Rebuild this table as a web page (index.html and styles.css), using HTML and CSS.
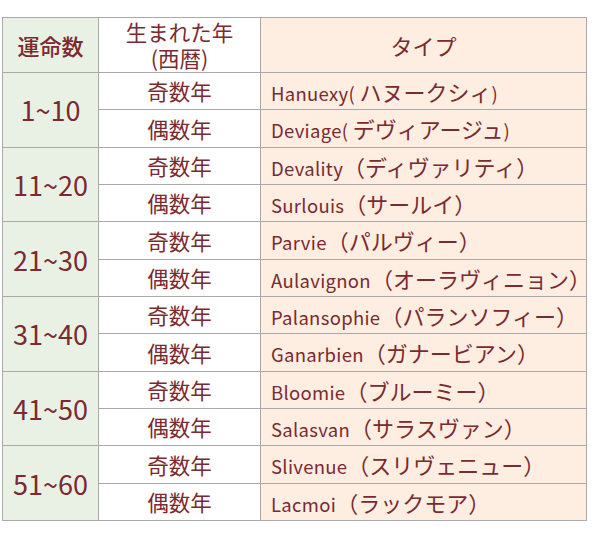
FILE: index.html
```html
<!DOCTYPE html>
<html lang="ja">
<head>
<meta charset="utf-8">
<link rel="stylesheet" href="styles.css">
</head>
<body>
<table class="fate">
  <colgroup>
    <col class="c1"><col class="c2"><col class="c3">
  </colgroup>
  <thead>
    <tr class="head">
      <th class="num">運命数</th>
      <th class="year"><span class="line">生まれた年</span><span class="line">(西暦)</span></th>
      <th class="type">タイプ</th>
    </tr>
  </thead>
  <tbody>
    <tr><td class="num" rowspan="2">1~10</td><td class="year">奇数年</td><td class="type">Hanuexy( <span class="kana">ハヌークシィ</span>)</td></tr>
    <tr><td class="year">偶数年</td><td class="type">Deviage( <span class="kana">デヴィアージュ</span>)</td></tr>
    <tr><td class="num" rowspan="2">11~20</td><td class="year">奇数年</td><td class="type">Devality<span class="kana">（ディヴァリティ）</span></td></tr>
    <tr><td class="year">偶数年</td><td class="type">Surlouis<span class="kana">（サールイ）</span></td></tr>
    <tr><td class="num" rowspan="2">21~30</td><td class="year">奇数年</td><td class="type">Parvie<span class="kana">（パルヴィー）</span></td></tr>
    <tr><td class="year">偶数年</td><td class="type">Aulavignon<span class="kana">（オーラヴィニョン）</span></td></tr>
    <tr><td class="num" rowspan="2">31~40</td><td class="year">奇数年</td><td class="type">Palansophie<span class="kana">（パランソフィー）</span></td></tr>
    <tr><td class="year">偶数年</td><td class="type">Ganarbien<span class="kana">（ガナービアン）</span></td></tr>
    <tr><td class="num" rowspan="2">41~50</td><td class="year">奇数年</td><td class="type">Bloomie<span class="kana">（ブルーミー）</span></td></tr>
    <tr><td class="year">偶数年</td><td class="type">Salasvan<span class="kana">（サラスヴァン）</span></td></tr>
    <tr><td class="num" rowspan="2">51~60</td><td class="year">奇数年</td><td class="type">Slivenue<span class="kana">（スリヴェニュー）</span></td></tr>
    <tr><td class="year">偶数年</td><td class="type">Lacmoi<span class="kana">（ラックモア）</span></td></tr>
  </tbody>
</table>
</body>
</html>
```
FILE: styles.css
```css
html, body {
  margin: 0;
  padding: 0;
  background: #ffffff;
}
body {
  padding: 17px 0 0 2px;
  font-family: "Noto Sans CJK JP", "Noto Sans", sans-serif;
  color: #7a2a30;
}
.fate {
  border-collapse: collapse;
  table-layout: fixed;
  width: 584px;
}
.c1 { width: 96px; }
.c2 { width: 162px; }
.c3 { width: 326px; }
.fate th, .fate td {
  border: 1px solid #a9a9a9;
  padding: 0;
  font-weight: normal;
  line-height: 1;
}
.head { height: 55px; }
.fate tbody tr { height: 37.33px; }
.fate .num {
  background: #e9f1e5;
  text-align: center;
  font-size: 27px;
}
.fate th.num { font-size: 22px; font-weight: 500; }
.fate .year {
  background: #ffffff;
  text-align: center;
  font-size: 21.5px;
}
.fate th.year { font-size: 21.5px; }
.line {
  display: block;
  line-height: 26px;
  height: 26px;
}
.fate .type {
  background: #fdeee1;
  text-align: left;
  padding-left: 10px;
  font-size: 18.5px;
  letter-spacing: 0.3px;
  white-space: nowrap;
}
.kana { font-size: 22px; letter-spacing: 0; }
.fate th.type { text-align: center; padding-left: 0; font-size: 22px; letter-spacing: 0; }
```
